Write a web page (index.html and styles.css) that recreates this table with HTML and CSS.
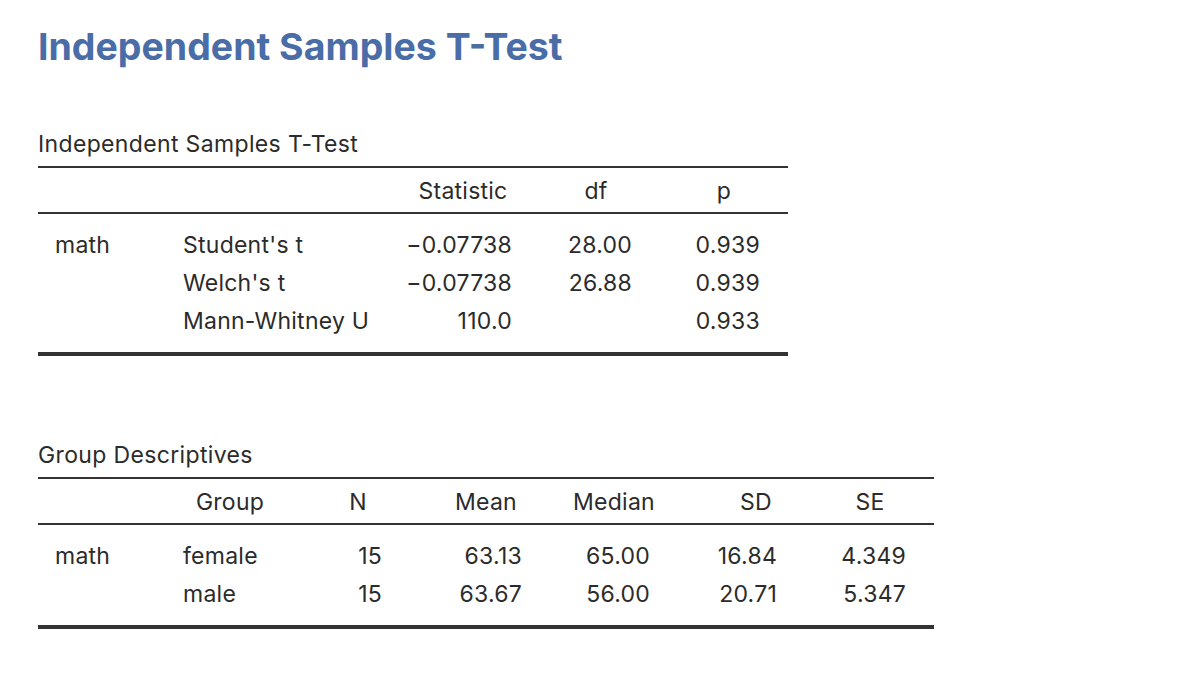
FILE: index.html
```html
<!DOCTYPE html>
<html>
<head>
<meta charset="utf-8">
<link rel="stylesheet" href="styles.css">
</head>
<body>
<div class="page">
  <h1 class="title">Independent Samples T-Test</h1>

  <section class="block block-ttest">
    <div class="caption">Independent Samples T-Test</div>
    <table class="tbl tbl-ttest">
      <colgroup>
        <col class="w1"><col class="w2"><col class="w3"><col class="w4"><col class="w5">
      </colgroup>
      <thead>
        <tr>
          <th class="h1"></th>
          <th class="h2"></th>
          <th class="h3">Statistic</th>
          <th class="h4">df</th>
          <th class="h5">p</th>
        </tr>
      </thead>
      <tbody>
        <tr class="first">
          <td class="c1">math</td>
          <td class="c2">Student's t</td>
          <td class="c3 num">−0.07738</td>
          <td class="c4 num">28.00</td>
          <td class="c5 num">0.939</td>
        </tr>
        <tr>
          <td class="c1"></td>
          <td class="c2">Welch's t</td>
          <td class="c3 num">−0.07738</td>
          <td class="c4 num">26.88</td>
          <td class="c5 num">0.939</td>
        </tr>
        <tr class="last">
          <td class="c1"></td>
          <td class="c2">Mann-Whitney U</td>
          <td class="c3 num">110.0</td>
          <td class="c4 num"></td>
          <td class="c5 num">0.933</td>
        </tr>
      </tbody>
    </table>
  </section>

  <section class="block block-desc">
    <div class="caption">Group Descriptives</div>
    <table class="tbl tbl-desc">
      <colgroup>
        <col class="d1"><col class="d2"><col class="d3"><col class="d4"><col class="d5"><col class="d6"><col class="d7">
      </colgroup>
      <thead>
        <tr>
          <th class="g1"></th>
          <th class="g2">Group</th>
          <th class="g3">N</th>
          <th class="g4">Mean</th>
          <th class="g5">Median</th>
          <th class="g6">SD</th>
          <th class="g7">SE</th>
        </tr>
      </thead>
      <tbody>
        <tr class="first">
          <td class="e1">math</td>
          <td class="e2">female</td>
          <td class="e3 num">15</td>
          <td class="e4 num">63.13</td>
          <td class="e5 num">65.00</td>
          <td class="e6 num">16.84</td>
          <td class="e7 num">4.349</td>
        </tr>
        <tr class="last">
          <td class="e1"></td>
          <td class="e2">male</td>
          <td class="e3 num">15</td>
          <td class="e4 num">63.67</td>
          <td class="e5 num">56.00</td>
          <td class="e6 num">20.71</td>
          <td class="e7 num">5.347</td>
        </tr>
      </tbody>
    </table>
  </section>
</div>
</body>
</html>
```

FILE: styles.css
```css
html, body {
  margin: 0;
  padding: 0;
  background: #ffffff;
}

body {
  font-family: Inter, "Liberation Sans", sans-serif;
  color: #2b2b2b;
}

.page {
  padding: 24px 0 0 38px;
}

.title {
  margin: 0;
  font-size: 37.5px;
  line-height: 46px;
  font-weight: 700;
  color: #4a6da7;
}

.block-ttest {
  margin-top: 62px;
}

.block-desc {
  margin-top: 87px;
}

.caption {
  font-size: 23px;
  letter-spacing: 0.35px;
  line-height: 24px;
  margin-bottom: 10px;
}

.tbl {
  border-collapse: collapse;
  table-layout: fixed;
  font-size: 23px;
  letter-spacing: 0.25px;
  line-height: 24px;
}

.tbl thead tr {
  border-top: 2px solid #333333;
  border-bottom: 2px solid #333333;
}

.tbl tbody tr.last {
  border-bottom: 4px solid #333333;
}

.tbl th {
  font-weight: 400;
  text-align: center;
  height: 46px;
  padding: 2px 0 0 0;
  box-sizing: border-box;
  vertical-align: middle;
  white-space: nowrap;
}

.tbl td {
  height: 38px;
  padding-top: 7px;
  padding-bottom: 7px;
  box-sizing: border-box;
  vertical-align: middle;
  text-align: left;
  white-space: nowrap;
}

.tbl tbody tr.first td {
  padding-top: 19px;
  height: 50px;
}

.tbl tbody tr.last td {
  padding-bottom: 19px;
  height: 50px;
}

.tbl td.num {
  text-align: right;
}

/* T-test table columns: total 750px */
.tbl-ttest { width: 750px; }
.w1 { width: 128px; }
.w2 { width: 234px; }
.w3 { width: 140px; }
.w4 { width: 120px; }
.w5 { width: 128px; }

.tbl .h3 { padding-right: 14px; }
.tbl .h4 { padding-right: 8px; }

.c1 { padding-left: 17px; padding-right: 0; }
.c2 { padding-left: 17px; padding-right: 0; }
.c3 { padding-left: 0; padding-right: 28px; }
.c4 { padding-left: 10px; padding-right: 28px; }
.c5 { padding-left: 10px; padding-right: 28px; }

/* Descriptives table columns: total 896px */
.tbl-desc { width: 896px; }
.d1 { width: 128px; }
.d2 { width: 134px; }
.d3 { width: 100px; }
.d4 { width: 140px; }
.d5 { width: 130px; }
.d6 { width: 130px; }
.d7 { width: 134px; }

.tbl .g2 { padding-right: 6px; }
.tbl .g3 { padding-left: 16px; }
.tbl .g4 { padding-left: 32px; }
.tbl .g5 { padding-left: 18px; }
.tbl .g6 { padding-left: 42px; }
.tbl .g7 { padding-left: 6px; }

.e1 { padding-left: 17px; padding-right: 0; }
.e2 { padding-left: 17px; padding-right: 10px; }
.e3 { padding-left: 10px; padding-right: 18px; }
.e4 { padding-left: 20px; padding-right: 18px; }
.e5 { padding-left: 20px; padding-right: 20px; }
.e6 { padding-left: 20px; padding-right: 23px; }
.e7 { padding-left: 20px; padding-right: 28px; }
```
